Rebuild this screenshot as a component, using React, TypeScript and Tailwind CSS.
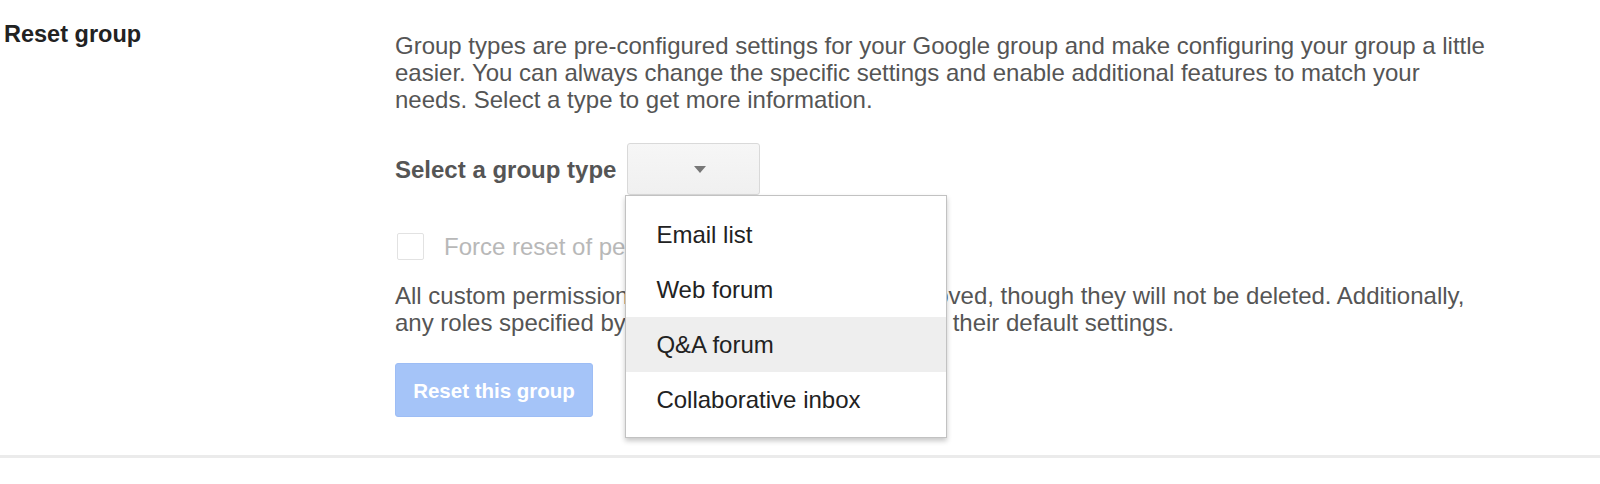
import React from 'react';

const groupTypes = ['Email list', 'Web forum', 'Q&A forum', 'Collaborative inbox'];

export default function App() {
  const highlighted = 'Q&A forum';

  return (
    <div className="w-[1600px] h-[484px] bg-white font-['Liberation_Sans',Arial,sans-serif] text-[24px] leading-[27px] overflow-hidden">
      <div className="flex">
        {/* Section title */}
        <div className="w-[395px] shrink-0 pl-[4px] pt-[21px]">
          <h2 className="font-bold text-[23.5px] text-[#222]">Reset group</h2>
        </div>

        {/* Settings column */}
        <div className="pt-[32px] text-[#555]">
          <p>
            Group types are pre-configured settings for your Google group and make configuring your group a little
            <br />
            easier. You can always change the specific settings and enable additional features to match your
            <br />
            needs. Select a type to get more information.
          </p>

          {/* Group type select */}
          <div className="mt-[30px] flex items-center">
            <span className="font-bold text-[#555]">Select a group type</span>
            <div className="relative ml-[11px]">
              <button className="h-[52px] w-[133px] rounded-[3px] border border-[#d9d9d9] bg-gradient-to-b from-[#f6f6f6] to-[#f0f0f0] flex items-center justify-center pl-[12px]">
                <svg width="12" height="7" viewBox="0 0 12 7">
                  <path d="M0 0h12L6 7z" fill="#777" />
                </svg>
              </button>

              {/* Open menu */}
              <div className="absolute left-[-2px] top-full z-10 w-[322px] border border-[#c2c2c2] bg-white pt-[11px] pb-[10px] shadow-[0_3px_5px_rgba(0,0,0,0.22)]">
                {groupTypes.map((t) => (
                  <div
                    key={t}
                    className={`h-[55px] flex items-center pl-[30px] text-[#222] ${t === highlighted ? 'bg-[#eeeeee]' : ''}`}
                  >
                    {t}
                  </div>
                ))}
              </div>
            </div>
          </div>

          {/* Force reset checkbox */}
          <div className="mt-[38px] flex items-center">
            <span className="ml-[2px] h-[27px] w-[27px] rounded-[2px] border border-[#e2e2e2] bg-white" />
            <span className="ml-[20px] text-[#b8b8b8]">Force reset of permissions</span>
          </div>

          <p className="mt-[22px]">
            All custom permissions and group roles will be removed, though they will not be deleted. Additionally,
            <br />
            any roles specified by the group type will be reset to their default settings.
          </p>

          <button className="mt-[27px] h-[54px] w-[198px] rounded-[3px] border border-[#9dbdf5] bg-[#a5c4f8] text-[20.5px] font-bold text-white">
            Reset this group
          </button>
        </div>
      </div>

      <div className="mt-[38px] h-[3px] bg-[#ebebeb]" />
    </div>
  );
}
